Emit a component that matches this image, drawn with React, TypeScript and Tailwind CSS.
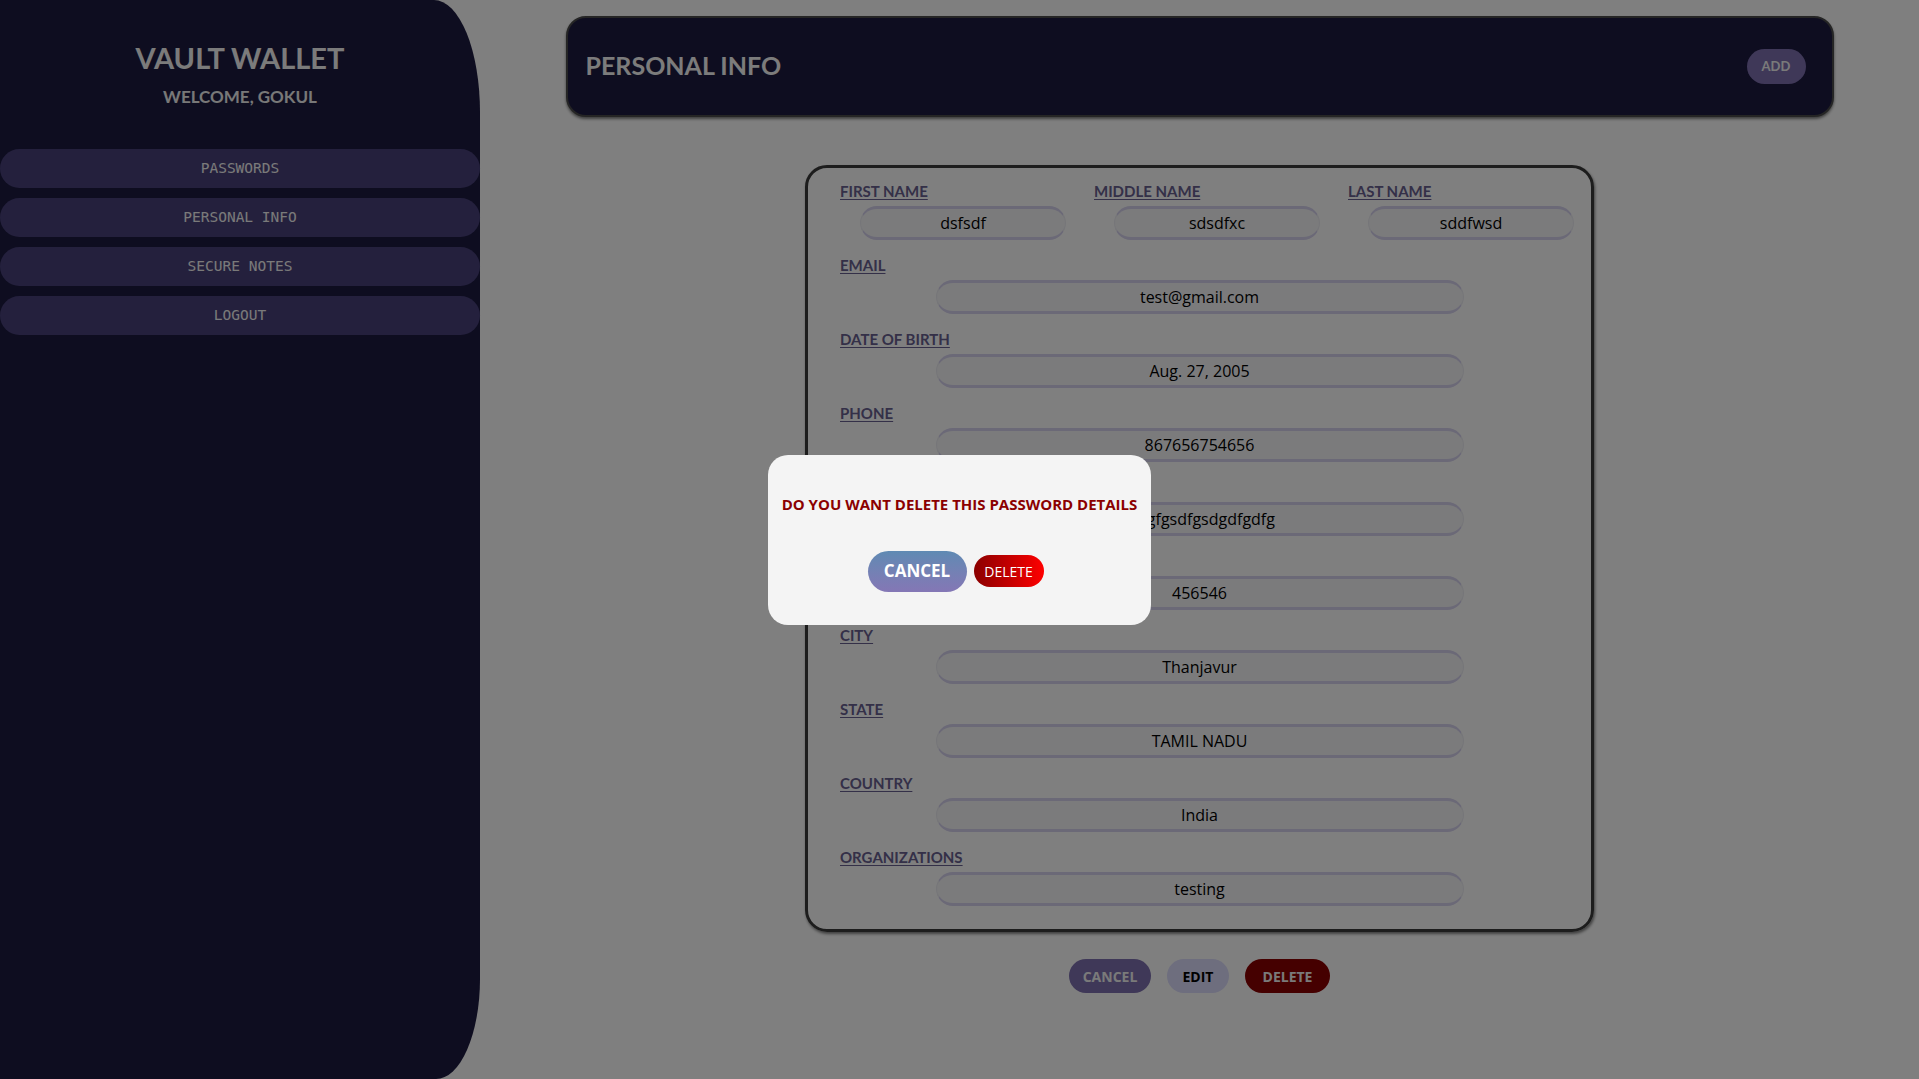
import React from "react";

const rows: [string, string][] = [
  ["EMAIL", "test@gmail.com"],
  ["DATE OF BIRTH", "Aug. 27, 2005"],
  ["PHONE", "867656754656"],
  ["ADDRESS", "sdfgfgsdfgsdgdfgdfg"],
  ["PINCODE", "456546"],
  ["CITY", "Thanjavur"],
  ["STATE", "TAMIL NADU"],
  ["COUNTRY", "India"],
  ["ORGANIZATIONS", "testing"],
];

const names: [string, string][] = [
  ["FIRST NAME", "dsfsdf"],
  ["MIDDLE NAME", "sdsdfxc"],
  ["LAST NAME", "sddfwsd"],
];

function Label({ children }: { children: React.ReactNode }) {
  return (
    <div className="text-[15px] font-bold leading-[18px] text-[#686090] underline underline-offset-2">
      {children}
    </div>
  );
}

function Field({ value, className }: { value: string; className: string }) {
  return (
    <div
      className={`mt-[6px] flex h-[34px] items-center justify-center rounded-full border-x border-y-[3px] border-x-[#ececf2] border-y-[#d6d2ee] bg-[#f6f6f8] font-['Open_Sans',sans-serif] text-[16px] font-medium text-black ${className}`}
    >
      {value}
    </div>
  );
}

export default function App() {
  return (
    <div className="relative flex h-[1079px] w-full overflow-hidden bg-white font-['Lato',sans-serif]">
      <aside className="flex h-full w-[480px] shrink-0 flex-col items-center rounded-tr-[46px_112px] rounded-br-[44px_100px] bg-[#1c1a40] pt-[40px]">
        <h1 className="text-[29px] font-bold leading-[35px] text-[#f6f6f6]">VAULT WALLET</h1>
        <div className="mt-[11px] text-[17px] font-bold leading-[22px] text-[#f0f0f0]">WELCOME, GOKUL</div>
        <nav className="mt-[41px] flex w-full flex-col gap-[10px]">
          {["PASSWORDS", "PERSONAL INFO", "SECURE NOTES", "LOGOUT"].map((t) => (
            <div
              key={t}
              className="flex h-[39px] w-full items-center justify-center rounded-full bg-[#48407a] font-['DejaVu_Sans_Mono',monospace] text-[14.5px] text-[#f4f4f4]"
            >
              {t}
            </div>
          ))}
        </nav>
      </aside>

      <main className="flex flex-1 flex-col items-center pt-[16px]">
        <header className="flex h-[101px] w-[1268px] items-center justify-between rounded-[20px] border-2 border-[#4a4a4a] bg-[#1c1a40] pl-[18px] pr-[26px] shadow-[0_2px_3px_rgba(0,0,0,0.5)]">
          <h2 className="-mt-[2px] text-[25px] font-bold text-[#f8f8f8]">PERSONAL INFO</h2>
          <button className="flex h-[35px] w-[59px] items-center justify-center rounded-full bg-[#7e70b0] text-[13px] font-bold text-[#f4f4f4]">
            ADD
          </button>
        </header>

        <section className="mt-[48px] w-[789px] rounded-[22px] border-[3px] border-[#3a3a3a] px-[32px] pb-[23px] pt-[14px] shadow-[1px_2px_3px_rgba(0,0,0,0.5)]">
          <div className="flex">
            {names.map(([l, v]) => (
              <div key={l} className="w-[254px] shrink-0">
                <Label>{l}</Label>
                <Field value={v} className="ml-[20px] w-[206px]" />
              </div>
            ))}
          </div>
          {rows.map(([l, v]) => (
            <div key={l} className="mt-[16px]">
              <Label>{l}</Label>
              <Field value={v} className="mx-auto w-[528px]" />
            </div>
          ))}
        </section>

        <div className="mt-[27px] flex gap-[16px] font-['Open_Sans',sans-serif]">
          <button className="h-[34px] w-[82px] rounded-full bg-[#7e70b0] text-[14px] font-bold text-[#f4f4f4]">CANCEL</button>
          <button className="h-[34px] w-[62px] rounded-full bg-[#dcdcfc] text-[14px] font-bold text-black">EDIT</button>
          <button className="h-[34px] w-[85px] rounded-full bg-[#8b0000] text-[14px] font-bold text-[#f4f4f4]">DELETE</button>
        </div>
      </main>

      <div className="fixed inset-0 flex items-center justify-center bg-black/50">
        <div className="flex h-[170px] w-[383px] flex-col items-center rounded-[20px] bg-[#f4f4f4] pt-[40px] font-['Open_Sans',sans-serif]">
          <p className="text-[15px] font-bold leading-[18px] text-[#8b0000]">DO YOU WANT DELETE THIS PASSWORD DETAILS</p>
          <div className="mr-[8px] mt-[38px] flex items-center gap-[7px]">
            <button className="h-[41px] w-[99px] rounded-full bg-linear-to-b from-[#5f8ab3] to-[#8477b5] text-[17px] font-bold text-white">
              CANCEL
            </button>
            <button className="h-[32px] w-[70px] rounded-full bg-linear-to-r from-[#8b0000] to-[#ff0000] text-[14px] text-white">
              DELETE
            </button>
          </div>
        </div>
      </div>
    </div>
  );
}
